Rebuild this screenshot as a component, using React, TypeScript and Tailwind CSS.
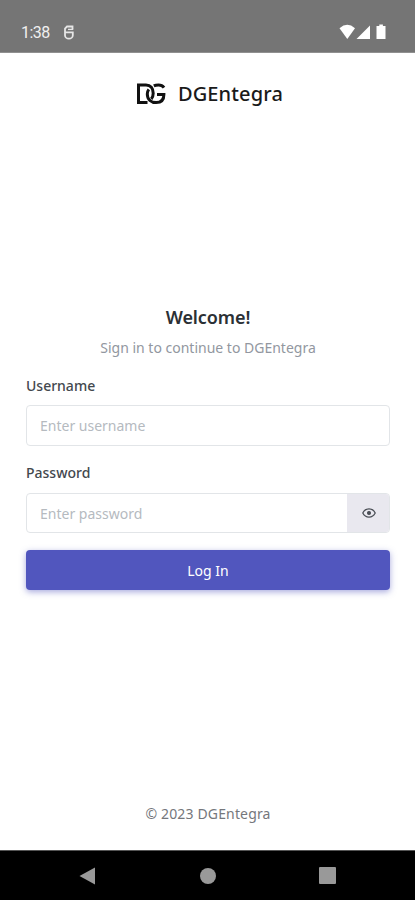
import { useState } from 'react'

function StatusBar() {
  return (
    <div className="flex h-[53px] shrink-0 items-end justify-between border-b border-[#909090] bg-[#757575] pr-[28px] pb-[10px] pl-[21px] text-white">
      <div className="flex items-center gap-[13px]">
        <span className="font-['Roboto',sans-serif] text-[16px] leading-[18px] tracking-[-0.5px] text-[#f0f0f0]">1:38</span>
        <svg className="mb-[2px]" width="12" height="15" viewBox="0 0 12 15" fill="none" stroke="#e6e6e6" strokeWidth="1.8">
          <path d="M9.5 4V1.500H4L2 3.500v6.700a3.900 3.500 0 0 0 7.800 0V7.300H2" />
          <path d="M5 4.400h5.300" strokeWidth="1.300" />
        </svg>
      </div>
      <svg className="mb-[2px]" width="48" height="16" viewBox="0 0 48 16" fill="currentColor">
        <path d="M0.500 4.300Q8.300 -2.600 16 4.300L8.300 15Z" />
        <path d="M31 1.500V15H17.500Z" />
        <path d="M40.300 0.500h3.600v1.500h2.600V15h-9V2h2.800Z" />
      </svg>
    </div>
  )
}

function Logo() {
  return (
    <svg width="29" height="22" viewBox="0 0 29 22" fill="none" stroke="#111111" strokeWidth="3">
      <path d="M10.500 19.500H1.500V2H9c4.600 0 7.200 3.400 7.200 8.200 0 2.400-.6 4.300-1.900 5.800" />
      <path d="M27 4.600C25.800 2.900 24 2 21.500 2c-2 0-3.500.3-4.700.9" />
      <path d="M11.800 6.300c-1 1.300-1.500 2.900-1.500 4.700 0 5.400 3.900 8.600 8.900 8.600 5 0 7.700-2.700 7.700-8.100H20" />
    </svg>
  )
}

function EyeIcon() {
  return (
    <svg className="ml-px" width="14" height="10" viewBox="0 0 14 10" fill="none" stroke="#4b4f56" strokeWidth="1.300">
      <path d="M0.800 5C2.200 2.200 4.300 0.900 7 0.900S11.800 2.200 13.200 5C11.800 7.800 9.700 9.100 7 9.100S2.200 7.800 0.800 5Z" />
      <circle cx="7" cy="5" r="1.400" fill="#4b4f56" />
    </svg>
  )
}

function NavBar() {
  return (
    <div className="flex h-[50px] shrink-0 items-center justify-between border-t border-[#555555] bg-black px-[79px]">
      <svg width="17" height="18" viewBox="0 0 17 18" fill="#999999">
        <path d="M16 0.500V17.500L0.500 9Z" />
      </svg>
      <div className="h-4 w-4 rounded-full bg-[#999999]" />
      <div className="h-[17px] w-[17px] rounded-[1px] bg-[#999999]" />
    </div>
  )
}

export default function App() {
  const [username, setUsername] = useState('')
  const [password, setPassword] = useState('')
  const [showPassword, setShowPassword] = useState(false)

  return (
    <div className="flex h-screen w-full flex-col bg-white font-['Noto_Sans',sans-serif]">
      <StatusBar />

      <header className="flex justify-center gap-[12px] pt-[30px] pl-[5px]">
        <Logo />
        <h1 className="text-[20px] leading-[22px] font-medium tracking-[0.150px] text-[#1a1a1a]">DGEntegra</h1>
      </header>

      <main className="mt-[199px] pr-[25px] pl-[26px]">
        <h2 className="text-center text-[18px] leading-[26px] font-semibold tracking-[-0.1px] text-[#2b3035]">Welcome!</h2>
        <p className="mt-[7px] text-center text-[14px] leading-[22px] text-[#9297a0]">Sign in to continue to DGEntegra</p>

        <form onSubmit={(e) => e.preventDefault()}>
          <label htmlFor="username" className="mt-[16px] block text-[14px] leading-[22px] font-medium text-[#43484e]">
            Username
          </label>
          <input
            id="username"
            value={username}
            onChange={(e) => setUsername(e.target.value)}
            placeholder="Enter username"
            className="mt-[8px] block h-[41px] w-full rounded-[4px] border border-[#e2e5e8] px-[13px] text-[14px] outline-none placeholder:text-[#b5babf]"
          />

          <label htmlFor="password" className="mt-[16px] block text-[14px] leading-[22px] font-medium text-[#43484e]">
            Password
          </label>
          <div className="mt-[9px] flex h-[40px] overflow-hidden rounded-[4px] border border-[#e2e5e8]">
            <input
              id="password"
              type={showPassword ? 'text' : 'password'}
              value={password}
              onChange={(e) => setPassword(e.target.value)}
              placeholder="Enter password"
              className="min-w-0 flex-1 px-[13px] text-[14px] outline-none placeholder:text-[#b5babf]"
            />
            <button
              type="button"
              onClick={() => setShowPassword(!showPassword)}
              className="flex w-[42px] items-center justify-center bg-[#e9e8ef]"
              aria-label="Show password"
            >
              <EyeIcon />
            </button>
          </div>

          <button
            type="submit"
            className="mt-[17px] h-[40px] w-full rounded-[4px] bg-[#5156be] text-[14px] text-white shadow-[0_2px_6px_rgba(81,86,190,0.5)]"
          >
            Log In
          </button>
        </form>
      </main>

      <footer className="mt-auto mb-[25px] pl-px text-center text-[14px] leading-[22px] tracking-[0.15px] text-[#75777c]">© 2023 DGEntegra</footer>

      <NavBar />
    </div>
  )
}
